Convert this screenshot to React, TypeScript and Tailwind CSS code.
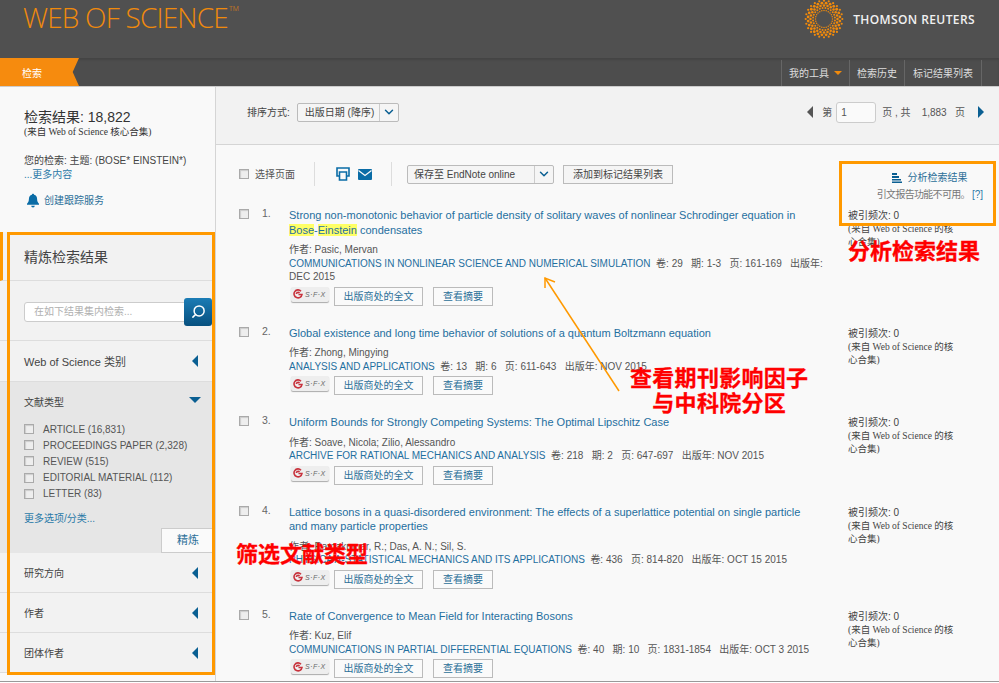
import { ChevronDown, Search } from "lucide-react";

const results = [
  {
    n: 1,
    title: (
      <>
        Strong non-monotonic behavior of particle density of solitary waves of nonlinear Schrodinger equation in{" "}
        <span className="bg-[#ffff66]">Bose</span>-<span className="bg-[#ffff66]">Einstein</span> condensates
      </>
    ),
    authors: "Pasic, Mervan",
    journal: "COMMUNICATIONS IN NONLINEAR SCIENCE AND NUMERICAL SIMULATION",
    meta: "卷: 29   期: 1-3   页: 161-169   出版年: DEC 2015",
  },
  {
    n: 2,
    title: "Global existence and long time behavior of solutions of a quantum Boltzmann equation",
    authors: "Zhong, Mingying",
    journal: "ANALYSIS AND APPLICATIONS",
    meta: "卷: 13   期: 6   页: 611-643   出版年: NOV 2015",
  },
  {
    n: 3,
    title: "Uniform Bounds for Strongly Competing Systems: The Optimal Lipschitz Case",
    authors: "Soave, Nicola; Zilio, Alessandro",
    journal: "ARCHIVE FOR RATIONAL MECHANICS AND ANALYSIS",
    meta: "卷: 218   期: 2   页: 647-697   出版年: NOV 2015",
  },
  {
    n: 4,
    title:
      "Lattice bosons in a quasi-disordered environment: The effects of a superlattice potential on single particle and many particle properties",
    authors: "Ramakumar, R.; Das, A. N.; Sil, S.",
    journal: "PHYSICA A-STATISTICAL MECHANICS AND ITS APPLICATIONS",
    meta: "卷: 436   页: 814-820   出版年: OCT 15 2015",
  },
  {
    n: 5,
    title: "Rate of Convergence to Mean Field for Interacting Bosons",
    authors: "Kuz, Elif",
    journal: "COMMUNICATIONS IN PARTIAL DIFFERENTIAL EQUATIONS",
    meta: "卷: 40   期: 10   页: 1831-1854   出版年: OCT 3 2015",
  },
];

const docTypes = [
  "ARTICLE (16,831)",
  "PROCEEDINGS PAPER (2,328)",
  "REVIEW (515)",
  "EDITORIAL MATERIAL (112)",
  "LETTER (83)",
];

function Check() {
  return <span className="block w-[10px] h-[10px] border border-[#aaa] bg-[#eee] shadow-[inset_1px_1px_1px_#ccc] shrink-0" />;
}

function TriLeft({ className = "border-r-[#0a5f92]" }: { className?: string }) {
  return <span className={`block w-0 h-0 border-y-[6px] border-y-transparent border-r-[6px] ${className}`} />;
}

function Sfx() {
  return (
    <span className="flex items-center gap-[2px] ml-[2px] w-[38px] h-[15px] pl-[2px] bg-[#eeeeee] rounded-[2px] shadow-[0_1px_1px_#aaa] shrink-0 mb-[4px]">
      <svg width="10" height="10" viewBox="0 0 10 10" fill="none" stroke="#c8323c" strokeWidth="1.6">
        <path d="M8 2.2A4 4 0 1 0 9 5.5H5.5" />
        <path d="M3.4 5a1.6 1.6 0 0 1 3-.8" />
      </svg>
      <span className="text-[7px] italic text-[#666] tracking-[0.5px] leading-none">S·F·X</span>
    </span>
  );
}

function Logo() {
  const dots: { x: number; y: number; r: number }[] = [];
  const rings = [
    { rad: 8.5, r: 0.75 },
    { rad: 11, r: 1 },
    { rad: 13.5, r: 1.25 },
    { rad: 16, r: 1.4 },
    { rad: 18.3, r: 1.1 },
  ];
  rings.forEach((ring, j) => {
    for (let i = 0; i < 24; i++) {
      const a = ((i + (j % 2) / 2) / 24) * Math.PI * 2;
      dots.push({ x: 20 + Math.cos(a) * ring.rad, y: 20 + Math.sin(a) * ring.rad, r: ring.r });
    }
  });
  return (
    <svg width="40" height="40" viewBox="0 0 40 40" fill="#f08a0c" className="-mt-[1px]">
      {dots.map((d, i) => (
        <circle key={i} cx={d.x} cy={d.y} r={d.r} />
      ))}
    </svg>
  );
}

function Section({ label }: { label: string }) {
  return (
    <div className="flex items-center justify-between h-[40px] pl-[24px] pr-[17px] bg-[#f2f2f2] text-[10px] text-[#444] border-b border-[#ddd]">
      <span className="mt-[2px]">{label}</span>
      <TriLeft />
    </div>
  );
}

function Sidebar() {
  return (
    <aside className="w-[216px] shrink-0 border-r border-[#d5d5d5] bg-[#f9f9f9] flex flex-col">
      <div className="h-[145px] pl-[24px] pt-[21px]">
        <div className="text-[14px] leading-[18px] text-[#333]">检索结果: 18,822</div>
        <div className="text-[9.5px] leading-[12px] text-[#333] [font-family:'Liberation_Serif','Noto_Sans_CJK_SC',serif]">(来自 Web of Science 核心合集)</div>
        <div className="mt-[16px] text-[10px] leading-[13.5px] text-[#444]">您的检索: 主题: (BOSE* EINSTEIN*)</div>
        <div className="text-[10px] leading-[13.5px] text-[#2b7aa8]">...更多内容</div>
        <div className="mt-[12px] ml-[2px] flex items-center gap-[4px] text-[10px] text-[#2b6f98]">
          <svg width="14" height="15" viewBox="0 0 14 15" fill="#0a6ca6">
            <path d="M7 .8c.7 0 1.100.5 1.100 1 2 .5 3 2.100 3 4.200 0 2.300.7 3.500 1.900 4.700v1H1v-1c1.200-1.200 1.900-2.400 1.900-4.700 0-2.100 1-3.700 3-4.200 0-.5.4-1 1.100-1z" />
            <path d="M5.200 12.700h3.600a1.800 1.800 0 0 1-3.600 0z" />
          </svg>
          创建跟踪服务
        </div>
      </div>
      <div className="flex items-center h-[49px] pl-[21px] pt-[3px] bg-[#f2f2f2] border-b border-[#ddd] text-[14px] text-[#444] border-l-[3px] border-l-[#f90]">
        精炼检索结果
      </div>
      <div className="flex items-center h-[60px] pl-[24px] pt-[2px] bg-[#f2f2f2] border-b border-[#ddd]">
        <div className="flex items-center w-[161px] h-[20px] pl-[9px] bg-white border border-[#ccc] rounded-l-[3px] text-[10px] text-[#b0b0b0]">
          在如下结果集内检索...
        </div>
        <div className="flex items-center justify-center w-[28px] h-[28px] rounded-[3px] bg-gradient-to-b from-[#1b7cb5] to-[#07507f] -ml-[1px]">
          <Search size={15} strokeWidth={2.4} className="text-white -scale-x-100" />
        </div>
      </div>
      <div className="flex items-center justify-between h-[41px] pl-[24px] pr-[17px] bg-[#f2f2f2] border-b border-[#ddd] text-[11px] text-[#444]">
        <span className="mt-[2px]">Web of Science 类别</span>
        <TriLeft />
      </div>
      <div className="h-[171px] bg-[#e6e6e6] pl-[24px] pt-[13px] relative">
        <div className="flex items-center justify-between pr-[14px] text-[10px] h-[14px] text-[#444]">
          <span>文献类型</span>
          <span className="block w-0 h-0 border-x-[6px] border-x-transparent border-t-[6px] border-t-[#0a5f92] -mt-[5px]" />
        </div>
        <div className="mt-[12px] flex flex-col">
          {docTypes.map((d) => (
            <div key={d} className="flex items-center gap-[9px] h-[16.2px] text-[10px] text-[#555]">
              <Check />
              <span>{d}</span>
            </div>
          ))}
        </div>
        <div className="mt-[9px] text-[10px] text-[#2b7aa8]">更多选项/分类...</div>
        <div className="absolute right-0 bottom-0 flex items-center justify-center w-[54px] h-[25px] bg-[#fafafa] border border-[#ccc] text-[11px] text-[#2b6f98]">
          精炼
        </div>
      </div>
      <Section label="研究方向" />
      <Section label="作者" />
      <Section label="团体作者" />
    </aside>
  );
}

function ResultRow({ r }: { r: (typeof results)[number] }) {
  return (
    <div className="flex pb-[19px]">
      <div className="w-[23px] pt-[1px] shrink-0">
        <Check />
      </div>
      <div className="w-[27px] shrink-0 -mt-[2px] text-[10.5px] leading-[14px] text-[#666]">{r.n}.</div>
      <div className="w-[540px] shrink-0">
        <div className="w-[530px] text-[11px] leading-[14.5px] text-[#1f6f9f]">{r.title}</div>
        <div className="mt-[6px] text-[10px] leading-[13.5px] text-[#555]">作者: {r.authors}</div>
        <div className="text-[10px] leading-[13.5px] text-[#555] whitespace-pre-wrap">
          <span className="text-[#1f6f9f]">{r.journal}</span>
          {"  "}
          {r.meta}
        </div>
        <div className="mt-[3px] mb-[1px] flex items-center">
          <Sfx />
          <span className="ml-[5px] flex items-center justify-center w-[89px] h-[19px] bg-[#fafafa] border border-[#bbb] text-[10px] text-[#2b6f98]">出版商处的全文</span>
          <span className="ml-[10px] flex items-center justify-center w-[60px] h-[19px] bg-[#fafafa] border border-[#bbb] text-[10px] text-[#2b6f98]">查看摘要</span>
        </div>
      </div>
      <div className="ml-[19px] w-[112px] pt-[1px] text-[#444]">
        <div className="text-[10px] leading-[14px]">被引频次: 0</div>
        <div className="text-[9.5px] leading-[13px] [font-family:'Liberation_Serif','Noto_Sans_CJK_SC',serif]">(来自 Web of Science 的核心合集)</div>
      </div>
    </div>
  );
}

function Main() {
  return (
    <main className="flex-1 min-w-0">
      <div className="flex items-center justify-between h-[58px] pl-[31px] pr-[15px] pb-[7px] bg-[#f2f2f2] border-b border-[#d5d5d5]">
        <div className="flex items-center gap-[7px] text-[10px] text-[#444]">
          排序方式:
          <div className="flex items-center h-[19px] bg-[#f5f5f5] border border-[#bbb] rounded-[2px]">
            <span className="pl-[7px] pr-[5px] border-r border-[#ccc] leading-[17px]">出版日期 (降序)</span>
            <ChevronDown size={14} strokeWidth={2.5} className="mx-[2px] text-[#0a5f92]" />
          </div>
        </div>
        <div className="flex items-center text-[10px] text-[#555]">
          <TriLeft className="border-r-[#555]" />
          <span className="ml-[9px]">第</span>
          <span className="ml-[4px] flex items-center w-[40px] h-[21px] pl-[4px] bg-[#fafafa] border border-[#ccc] rounded-[3px]">1</span>
          <span className="ml-[6px] whitespace-pre">页 , 共    1,883   页</span>
          <span className="ml-[13px] block w-0 h-0 border-y-[6px] border-y-transparent border-l-[6px] border-l-[#0a5f92]" />
        </div>
      </div>
      <div className="flex items-center h-[63px] pl-[23px] pb-[5px] bg-[#f9f9f9]">
        <Check />
        <span className="ml-[6px] text-[10px] text-[#555]">选择页面</span>
        <span className="ml-[19px] h-[24px] border-l border-[#ddd]" />
        <svg width="14" height="14" viewBox="0 0 14 14" fill="none" stroke="#0a6ca6" strokeWidth="1.6" className="ml-[21px]">
          <path d="M3 9H1V1h12v8h-2" />
          <path d="M3.5 5h7v8h-7z" />
        </svg>
        <svg width="14" height="11" viewBox="0 0 14 11" className="ml-[8px]">
          <rect width="14" height="11" rx="1" fill="#0a6ca6" />
          <path d="M.5 1.500 7 6.500l6.500-5" fill="none" stroke="#f9f9f9" strokeWidth="1.3" />
        </svg>
        <span className="ml-[19px] h-[24px] border-l border-[#ddd]" />
        <div className="ml-[15px] flex items-center w-[147px] h-[19px] bg-[#f5f5f5] border border-[#bbb] rounded-[2px] text-[10px] text-[#444]">
          <span className="flex-1 pl-[6px] border-r border-[#ccc] leading-[17px]">保存至 EndNote online</span>
          <ChevronDown size={14} strokeWidth={2.5} className="mx-[2px] text-[#0a5f92]" />
        </div>
        <div className="ml-[9px] flex items-center justify-center w-[110px] h-[19px] bg-[#f5f5f5] border border-[#bbb] text-[10px] text-[#444]">添加到标记结果列表</div>
      </div>
      <div className="pl-[23px] bg-[#f9f9f9]">
        {results.map((r) => (
          <ResultRow key={r.n} r={r} />
        ))}
      </div>
    </main>
  );
}

export default function App() {
  return (
    <div className="relative w-[999px] h-[683px] overflow-hidden bg-white [font-family:'Liberation_Sans','Noto_Sans_CJK_SC',sans-serif]">
      <div className="h-[682px] overflow-hidden border-b border-[#999] bg-[#f9f9f9]">
        <header className="flex items-start justify-between h-[58px] bg-[#505050] pl-[23px] pr-[25px]">
          <div className="text-[28px] leading-[34px] font-light text-[#f08a0c] [font-family:'Open_Sans',sans-serif] tracking-[-0.8px] whitespace-nowrap">
            WEB OF SCIENCE<sup className="ml-[1px] text-[7px] tracking-normal align-[14px]">TM</sup>
          </div>
          <div className="flex items-center gap-[9px] -mr-[1px]">
            <Logo />
            <span className="text-[12px] font-semibold tracking-[0.4px] text-[#f0f0f0] [font-family:'Open_Sans',sans-serif]">THOMSON REUTERS</span>
          </div>
        </header>
        <nav className="flex items-center justify-between h-[29px] bg-[#4d4d4d] shadow-[inset_0_2px_2px_#444] border-b border-[#ccc]">
          <div className="flex items-center h-[28px] w-[79px] pl-[22px] pt-[3px] bg-[#f68b0e] text-[10px] text-white [clip-path:polygon(0_0,100%_0,92%_50%,100%_100%,0_100%)]">
            检索
          </div>
          <div className="flex h-[28px] mr-[17px] pt-[2px] text-[10px] text-[#ddd]">
            <span className="flex items-center gap-[5px] px-[7px] border-l border-[#666]">
              我的工具
              <span className="block w-0 h-0 border-x-[4px] border-x-transparent border-t-[4px] border-t-[#f08a0c]" />
            </span>
            <span className="flex items-center px-[7px] border-l border-[#666]">检索历史</span>
            <span className="flex items-center px-[8px] border-x border-[#666]">标记结果列表</span>
          </div>
        </nav>
        <div className="flex">
          <Sidebar />
          <Main />
        </div>
      </div>

      {/* annotations drawn over the screenshot */}
      <div className="absolute left-[7px] top-[232px] w-[208px] h-[443px] border-[3px] border-[#f90]" />
      <div className="absolute left-[839px] top-[161px] w-[157px] h-[65px] border-[3px] border-[#f90] pt-[6px]">
        <div className="flex items-center justify-center gap-[6px] pl-[24px] text-[10px] text-[#2b6f98]">
          <svg width="10" height="10" viewBox="0 0 10 10" fill="#0a5f92">
            <path d="M0 0h5v2H0zM0 3h7v2H0zM0 6h9v1.5H0zM0 8.500h10V10H0z" />
          </svg>
          分析检索结果
        </div>
        <div className="mt-[2px] pr-[10px] text-right text-[10px] text-[#777] tracking-[-0.7px]">
          引文报告功能不可用。 <span className="text-[#2b7aa8] tracking-normal">[?]</span>
        </div>
      </div>
      <svg className="absolute left-[535px] top-[270px]" width="95" height="130" viewBox="0 0 95 130" fill="none" stroke="#f90" strokeWidth="1.5">
        <path d="M84 121 10 8" />
        <path d="M10 18 10 8 20 12" />
      </svg>
      <div className="absolute left-[848px] top-[238px] text-[22px] leading-[28px] font-bold text-[#f00] [-webkit-text-stroke:0.3px_#f00]">分析检索结果</div>
      <div className="absolute left-[630px] top-[366px] text-[22px] leading-[25px] font-bold text-[#f00] text-center tracking-[0.3px] [-webkit-text-stroke:0.3px_#f00]">
        查看期刊影响因子
        <br />
        与中科院分区
      </div>
      <div className="absolute left-[236px] top-[541px] text-[22px] leading-[28px] font-bold text-[#f00] [-webkit-text-stroke:0.3px_#f00]">筛选文献类型</div>
    </div>
  );
}
